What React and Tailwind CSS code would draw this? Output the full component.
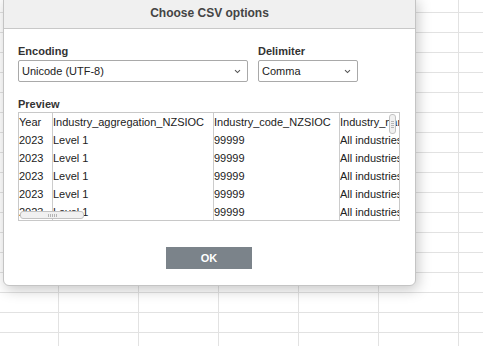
const ROWS = [
  ['Year', 'Industry_aggregation_NZSIOC', 'Industry_code_NZSIOC', 'Industry_name_NZSIOC'],
  ['2023', 'Level 1', '99999', 'All industries'],
  ['2023', 'Level 1', '99999', 'All industries'],
  ['2023', 'Level 1', '99999', 'All industries'],
  ['2023', 'Level 1', '99999', 'All industries'],
  ['2023', 'Level 1', '99999', 'All industries'],
];

function Chevron() {
  return (
    <svg width="7" height="5" viewBox="0 0 7 5" className="shrink-0">
      <path d="M1 1.2 L3.5 3.6 L6 1.2" fill="none" stroke="#555" strokeWidth="1.1" />
    </svg>
  );
}

function Select({ value, width }) {
  return (
    <div
      className={`${width} h-[22px] border border-[#a9a9a9] rounded-[2px] bg-white flex items-center justify-between pl-[3px] pr-[6px] text-[11px] text-[#222]`}
    >
      <span>{value}</span>
      <Chevron />
    </div>
  );
}

function Sheet() {
  const cells = [];
  for (let r = 0; r < 18; r++) {
    for (let c = 0; c < 7; c++) {
      cells.push(<div key={`${r}-${c}`} className="border-r border-b border-[#e2e2e2]" />);
    }
  }
  return (
    <div className="grid grid-cols-[59px_repeat(6,80px)] grid-rows-[13px_repeat(17,20px)]">
      {cells}
    </div>
  );
}

export default function App() {
  return (
    <div className="relative w-[483px] h-[346px] overflow-hidden bg-white font-['Liberation_Sans',Arial,sans-serif]">
      <Sheet />

      {/* dialog */}
      <div className="absolute left-[3px] top-[-3px] w-[413px] bg-white border border-[#c4c4c4] rounded-b-[6px] shadow-[2px_4px_14px_rgba(0,0,0,0.22)]">
        <div className="h-[31px] bg-[#f0f0f0] border-b border-[#c8c8c8] flex items-center justify-center text-[12px] font-bold text-[#444]">
          Choose CSV options
        </div>

        <div className="pt-[15px] pl-[14px] pb-[16px]">
          <div className="flex gap-[10px]">
            <div>
              <div className="h-[14px] leading-[14px] mb-[2px] text-[11px] font-bold text-[#333]">Encoding</div>
              <Select value="Unicode (UTF-8)" width="w-[230px]" />
            </div>
            <div>
              <div className="h-[14px] leading-[14px] mb-[2px] text-[11px] font-bold text-[#333]">Delimiter</div>
              <Select value="Comma" width="w-[100px]" />
            </div>
          </div>

          <div className="mt-[15px] h-[14px] leading-[14px] mb-[1px] text-[11px] font-bold text-[#333]">Preview</div>

          <div className="relative w-[382px] h-[109px] border border-[#c8c8c8] overflow-hidden">
            <table className="table-fixed border-separate border-spacing-0 w-[461px] text-[11px] text-[#222]">
              <colgroup>
                <col className="w-[34px]" />
                <col className="w-[161px]" />
                <col className="w-[126px]" />
                <col className="w-[140px]" />
              </colgroup>
              <tbody>
                {ROWS.map((row, i) => (
                  <tr key={i}>
                    {row.map((cell, j) => (
                      <td
                        key={j}
                        className="h-[18px] leading-[18px] p-0 whitespace-nowrap overflow-hidden border-r border-[#cccccc]"
                      >
                        {cell}
                      </td>
                    ))}
                  </tr>
                ))}
              </tbody>
            </table>

            {/* vertical scroll thumb */}
            <div className="absolute left-[370px] top-px w-[7px] h-[20px] rounded-[3px] border border-[#c2c2c2] bg-[#f1f1f1] flex flex-col items-center justify-center gap-[1px]">
              <div className="w-[3px] h-px bg-[#b5b5b5]" />
              <div className="w-[3px] h-px bg-[#b5b5b5]" />
              <div className="w-[3px] h-px bg-[#b5b5b5]" />
              <div className="w-[3px] h-px bg-[#b5b5b5]" />
            </div>

            {/* horizontal scroll thumb */}
            <div className="absolute left-px top-[98px] w-[64px] h-[8px] rounded-[3px] border border-[#c2c2c2] bg-[#f1f1f1] flex items-center justify-center gap-[1px]">
              <div className="w-px h-[3px] bg-[#b5b5b5]" />
              <div className="w-px h-[3px] bg-[#b5b5b5]" />
              <div className="w-px h-[3px] bg-[#b5b5b5]" />
              <div className="w-px h-[3px] bg-[#b5b5b5]" />
              <div className="w-px h-[3px] bg-[#b5b5b5]" />
            </div>
          </div>

          <div className="mt-[26px] flex justify-center pr-[15px]">
            <button className="w-[86px] h-[22px] bg-[#7b838a] text-white text-[11px] font-bold">OK</button>
          </div>
        </div>
      </div>
    </div>
  );
}
